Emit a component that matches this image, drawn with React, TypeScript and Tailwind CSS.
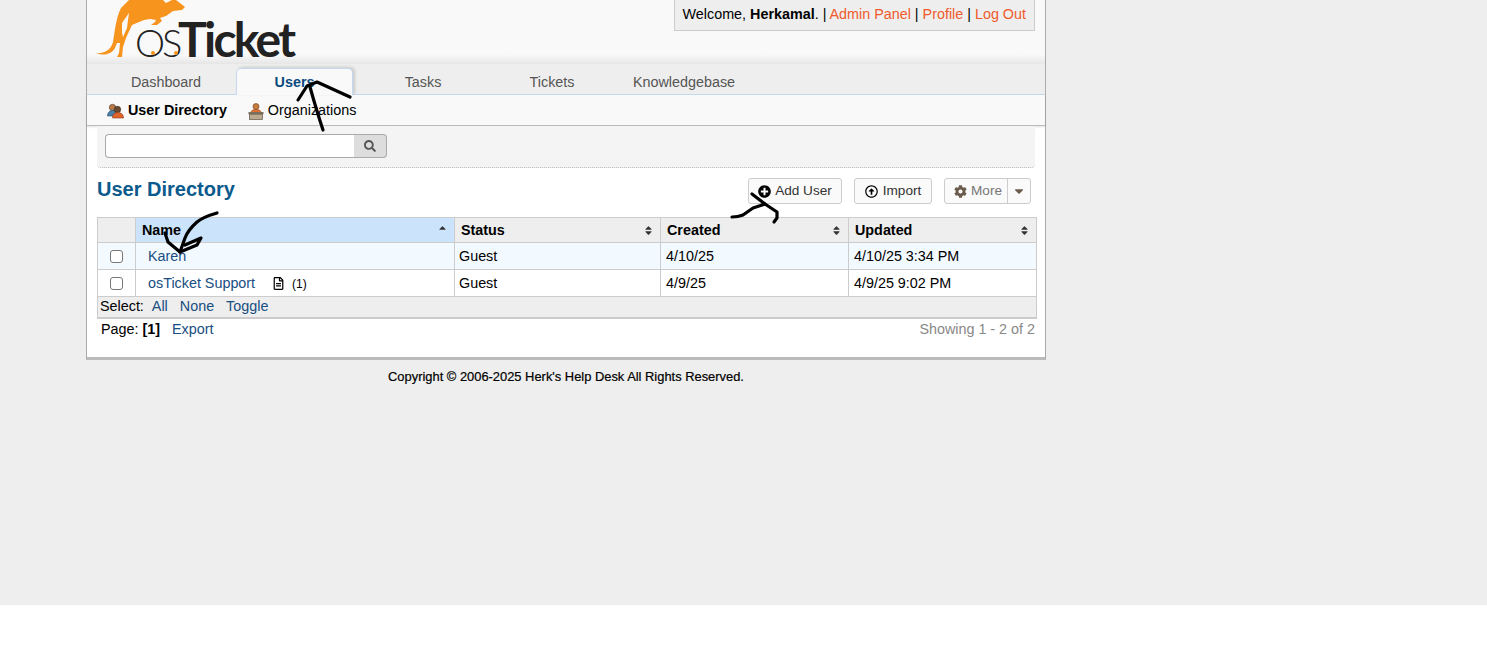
import { FaSearch, FaPlusCircle, FaRegArrowAltCircleUp, FaCog, FaCaretDown, FaRegFileAlt, FaSort, FaSortUp } from 'react-icons/fa';

const rows = [
    { name: 'Karen', status: 'Guest', created: '4/10/25', updated: '4/10/25 3:34 PM', tickets: 0 },
    { name: 'osTicket Support', status: 'Guest', created: '4/9/25', updated: '4/9/25 9:02 PM', tickets: 1 },
];

// Kangaroo plus the wordmark, the lettering stays real text
function Logo() {
    return (
        <svg width="210" height="64" viewBox="0 0 210 64" className="block">
            <g transform="translate(-95 0)">
                <path
                    fill="#f7941e"
                    fillRule="evenodd"
                    d="M96 53.5 C104 53.5 111 50 113 42 C115 30 116 18 121 8 L129 0 L163 0 L166 3 L172 0 L176 0 L185 7 L182 10 L173 11 L166 16 L160 18 L162 21 L157 25 L151 25 L155 22 L156 20 L150 19 L144 20 L132 25 L126 38 L123 47 L122 57 L117 57 L119 53 L120 43 L117 43 L115 48 C112 54 104 56 96 53.5 Z M129 13 L122 23 L122 33 L123 37 L127 28 L128 20 Z"
                />
            </g>
            <text x="40" y="57" fontFamily="Lato, sans-serif" fontSize="38" fontWeight="300" letterSpacing="-3" fill="#222">OS</text>
            <circle cx="58" cy="53" r="2" fill="#f7941e" />
            <circle cx="81" cy="53" r="2" fill="#f7941e" />
            <text x="83" y="57" fontFamily="Lato, sans-serif" fontSize="48" fontWeight="700" letterSpacing="-2.7" fill="#222">Ticket</text>
        </svg>
    );
}

function UsersIcon() {
    return (
        <svg width="17" height="16" viewBox="0 0 17 16">
            <circle cx="5.5" cy="4.5" r="3.2" fill="#b5794a" stroke="#5a3d28" strokeWidth="0.6" />
            <path d="M0.5 13 C0.5 9 3 7.5 5.5 7.5 C8.5 7.5 10 9 10 13 Z" fill="#4a7fa8" stroke="#2d4d66" strokeWidth="0.6" />
            <circle cx="10.5" cy="6.5" r="3.2" fill="#6b4a32" stroke="#33241a" strokeWidth="0.6" />
            <path d="M5.5 15 C5.5 11 8 9.5 10.5 9.5 C14 9.5 16.5 11 16.5 15 Z" fill="#e0632b" stroke="#8a3a18" strokeWidth="0.6" />
        </svg>
    );
}

function OrgIcon() {
    return (
        <svg width="16" height="17" viewBox="0 0 16 17">
            <circle cx="8" cy="3.5" r="3" fill="#c77b3f" stroke="#6b3f1e" strokeWidth="0.6" />
            <path d="M3 10 C3 7 5 6.5 8 6.5 C11 6.5 13 7 13 10 Z" fill="#e0702f" stroke="#8a3a18" strokeWidth="0.5" />
            <rect x="0.5" y="9" width="15" height="2.2" fill="#7d6f5c" />
            <rect x="1.5" y="11.2" width="13" height="5.3" fill="#bca98f" stroke="#5e5446" strokeWidth="0.7" />
        </svg>
    );
}

// The hand-drawn marker arrows lying over the screenshot
function Scribbles() {
    return (
        <svg className="absolute inset-0 pointer-events-none" width="1487" height="648" fill="none" stroke="#000" strokeWidth="3.2" strokeLinecap="round" strokeLinejoin="round">
            <path d="M323 130 Q317 112 310 87" />
            <path d="M298 100 L307 86 L317 82 L350 97" />
            <path d="M217 213 Q203 217 197 222 Q188 230 185 238 L180 252" />
            <path d="M165 233 L168 242 L180 252 L197 245 L201 238 L185 245" />
            <path d="M732 217 Q738 217 743 215 L753 208 L765 204 L752 194" />
            <path d="M765 204 L777 212 L777 218 L774 222" />
        </svg>
    );
}

function HeaderCell({ label, width, active }: { label: string; width: string; active?: boolean }) {
    return (
        <th className={`${width} h-[25px] border border-[#ccc] px-[6px] pt-[2px] text-left font-bold text-black ${active ? 'bg-[#cce4fb]' : 'bg-[#eee]'}`}>
            <div className="flex items-center justify-between">
                <span>{label}</span>
                {active ? <FaSortUp className="text-[11px] text-[#333]" /> : <FaSort className="text-[11px] text-[#333]" />}
            </div>
        </th>
    );
}

export default function App() {
    return (
        <div className="relative h-[648px] overflow-hidden bg-white font-['Liberation_Sans',Arial,sans-serif] text-[14.35px] text-black">
            <div className="h-[605px] bg-[#eee]">
                <div className="ml-[86px] h-[360px] w-[960px] border-x border-b-[3px] border-x-[#aaa] border-b-[#bbb] bg-white">
                    <header className="relative h-[64px] bg-gradient-to-b from-[#f9f9f9] from-[85%] to-[#e6e6e6]">
                        <div className="pl-[8px]">
                            <Logo />
                        </div>
                        <div className="absolute right-[10px] top-0 h-[31px] border-x border-b border-[#ccc] bg-[#eee] px-[8px] leading-[28px]">
                            Welcome, <b>Herkamal</b>. | <a className="text-[#f15a2b]">Admin Panel</a> | <a className="text-[#f15a2b]">Profile</a> | <a className="text-[#f15a2b]">Log Out</a>
                        </div>
                    </header>

                    <nav className="flex h-[31px] items-end border-b border-[#c5d9f1] bg-[#eee] pl-[9px] text-[#555]">
                        <div className="flex h-[30px] w-[140px] items-center justify-center pt-[8px]">Dashboard</div>
                        <div className="relative top-px flex h-[27px] w-[117px] items-center justify-center rounded-t-[5px] border-x border-t border-[#c5d9f1] bg-[#f9f9f9] pt-[2px] font-bold text-[#0a4a7f] shadow-[2px_-1px_3px_rgba(0,0,0,0.15)]">Users</div>
                        <div className="flex h-[30px] w-[140px] items-center justify-center pt-[8px]">Tasks</div>
                        <div className="flex h-[30px] w-[118px] items-center justify-center pt-[8px]">Tickets</div>
                        <div className="flex h-[30px] w-[146px] items-center justify-center pt-[8px]">Knowledgebase</div>
                    </nav>

                    <div className="flex h-[31px] items-center border-b border-[#bbb] bg-[#f9f9f9] pl-[20px] pt-[2px] shadow-[0_1px_2px_rgba(0,0,0,0.12)]">
                        <span className="mr-[4px]"><UsersIcon /></span>
                        <b className="mr-[21px]">User Directory</b>
                        <span className="mr-[4px]"><OrgIcon /></span>
                        <span>Organizations</span>
                    </div>

                    <main className="px-[10px]">
                        <div className="flex h-[42px] w-[938px] items-start rounded-b-[4px] border-b border-dotted border-[#bbb] bg-[#f4f4f4] pl-[8px] pt-[8px]">
                            <div className="h-[24px] w-[249px] rounded-l-[4px] border-y border-l border-[#aaa] bg-white" />
                            <div className="flex h-[24px] w-[33px] items-center justify-center rounded-r-[4px] border-y border-r border-[#aaa] bg-[#ddd] text-[12px] text-[#555]">
                                <FaSearch />
                            </div>
                        </div>

                        <div className="flex h-[49px] items-start justify-between pr-[4px] pt-[10px]">
                            <h2 className="text-[20px] font-bold leading-[22px] text-[#0a5a8d]">User Directory</h2>
                            <div className="flex items-center text-[13.6px]">
                                <div className="flex h-[26px] w-[94px] items-center justify-center gap-[4px] rounded-[3px] border border-[#ccc] bg-[#fafafa] text-[#333]">
                                    <FaPlusCircle className="text-[13px] text-black" /> Add User
                                </div>
                                <div className="ml-[12px] flex h-[26px] w-[78px] items-center justify-center gap-[5px] rounded-[3px] border border-[#ccc] bg-[#fafafa] text-[#333]">
                                    <FaRegArrowAltCircleUp className="text-[13px] text-black" /> Import
                                </div>
                                <div className="ml-[12px] flex h-[26px] w-[87px] items-center rounded-[3px] border border-[#ccc] bg-[#fafafa] text-[#777]">
                                    <div className="flex h-full w-[63px] items-center gap-[4px] border-r border-[#ccc] pl-[9px]">
                                        <FaCog className="text-[13px] text-[#6b5b4d]" /> More
                                    </div>
                                    <FaCaretDown className="ml-[4px] text-[14px] text-[#6b5b4d]" />
                                </div>
                            </div>
                        </div>

                        <table className="w-[939px] table-fixed border-collapse">
                            <thead>
                                <tr>
                                    <th className="w-[38px] border border-[#ccc] bg-[#eee]" />
                                    <HeaderCell label="Name" width="w-[319px]" active />
                                    <HeaderCell label="Status" width="w-[206px]" />
                                    <HeaderCell label="Created" width="w-[188px]" />
                                    <HeaderCell label="Updated" width="w-[188px]" />
                                </tr>
                            </thead>
                            <tbody>
                                {rows.map((row, i) => (
                                    <tr key={row.name} className={`h-[27px] ${i === 0 ? 'bg-[#f3faff]' : 'bg-white'}`}>
                                        <td className="border border-[#ccc] text-center">
                                            <span className="mx-auto block h-[13px] w-[13px] rounded-[3px] border border-[#767676] bg-white" />
                                        </td>
                                        <td className="border border-[#ccc] pl-[12px] pt-[2px]">
                                            <div className="flex items-center">
                                                <a className="text-[#184e81]">{row.name}</a>
                                                {row.tickets > 0 && (
                                                    <span className="ml-[17px] flex items-center gap-[7px] text-[12px]">
                                                        <FaRegFileAlt className="text-[13px]" /> ({row.tickets})
                                                    </span>
                                                )}
                                            </div>
                                        </td>
                                        <td className="border border-[#ccc] pl-[4px] pt-[2px]">{row.status}</td>
                                        <td className="border border-[#ccc] pl-[5px] pt-[2px]">{row.created}</td>
                                        <td className="border border-[#ccc] pl-[5px] pt-[2px]">{row.updated}</td>
                                    </tr>
                                ))}
                                <tr className="h-[21px] bg-[#eee]">
                                    <td colSpan={5} className="border border-b-2 border-[#ccc] pl-[2px] leading-[17px]">
                                        Select:<a className="ml-[8px] text-[#184e81]">All</a>
                                        <a className="ml-[12px] text-[#184e81]">None</a>
                                        <a className="ml-[12px] text-[#184e81]">Toggle</a>
                                    </td>
                                </tr>
                            </tbody>
                        </table>

                        <div className="flex h-[22px] w-[938px] items-center justify-between pl-[4px]">
                            <div>
                                Page: <b>[1]</b><a className="ml-[12px] text-[#184e81]">Export</a>
                            </div>
                            <span className="text-[#888]">Showing 1 - 2 of 2</span>
                        </div>
                    </main>
                </div>
                <div className="ml-[86px] w-[960px] pt-[7px] text-center text-[12.9px] text-black [-webkit-text-stroke:0.2px_black]">
                    Copyright © 2006-2025 Herk's Help Desk All Rights Reserved.
                </div>
            </div>
            <Scribbles />
        </div>
    );
}
